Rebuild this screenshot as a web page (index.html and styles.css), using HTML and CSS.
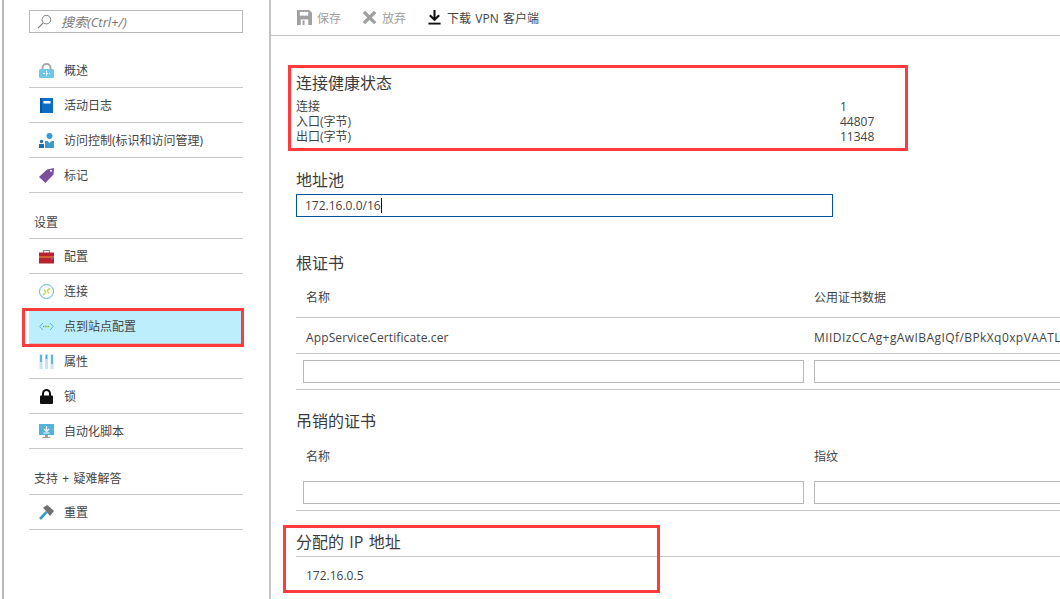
FILE: index.html
```html
<!DOCTYPE html>
<html lang="zh-CN">
<head>
<meta charset="utf-8">
<title>点到站点配置</title>
<link rel="stylesheet" href="styles.css">
</head>
<body>
<div class="app">
  <aside class="sidebar">
    <div class="search">
      <svg class="search-icon" viewBox="0 0 16 16"><circle cx="10" cy="6" r="4.6" fill="none" stroke="#777" stroke-width="1"/><path d="M6.6 9.4 1 15" stroke="#777" stroke-width="1.2" fill="none"/></svg>
      <span>搜索(Ctrl+/)</span>
    </div>
    <ul class="menu first">
      <li><svg class="ico" viewBox="0 0 15 15"><path d="M3.500 7V5a4 4 0 0 1 8 0V7" fill="none" stroke="#a8a8a8" stroke-width="2"/><rect y="6" width="15" height="9" rx="1.500" fill="#6ec6e8"/><path d="M7.500 7.500v6M4 10.500h7" stroke="#fff" stroke-width="1.200" stroke-dasharray="2 1"/></svg>概述</li>
      <li><svg class="ico" viewBox="0 0 15 15"><rect x="1" width="13" height="15" fill="#0a6fc4"/><rect x="1" width="2" height="15" fill="#0559a0"/><rect x="4.500" y="3" width="7" height="2.500" fill="#fff"/></svg>活动日志</li>
      <li><svg class="ico" viewBox="0 0 15 15"><circle cx="10.500" cy="3" r="3" fill="#3a9bd1"/><path d="M6 15V8h2.500l2 2 2-2H15v7z" fill="#3a9bd1"/><circle cx="2.500" cy="8.500" r="1.700" fill="#1f6fa8"/><rect y="11" width="5" height="4" fill="#1f6fa8"/></svg>访问控制(标识和访问管理)</li>
      <li><svg class="ico" viewBox="0 0 15 15"><path d="M0 9 8 1.500 15 0l-.5 6.500L6.500 15z" fill="#7b4f9e"/><circle cx="12" cy="2.800" r="1" fill="#fff"/></svg>标记</li>
    </ul>
    <h3 class="group">设置</h3>
    <ul class="menu">
      <li><svg class="ico" viewBox="0 0 15 15"><path d="M4.500 4V1.500h6V4" fill="none" stroke="#8a8a8a" stroke-width="1.200"/><rect y="3.500" width="15" height="11" fill="#b92231"/><rect y="7.500" width="15" height="1" fill="#e8a33c"/><rect x="12" y="8.500" width="2" height="2" fill="#8a5fb0"/></svg>配置</li>
      <li><svg class="ico" viewBox="0 0 15 15"><circle cx="7.500" cy="7.500" r="7" fill="#fff" stroke="#59b4d9" stroke-width="1"/><path d="M4 11 7 8M5 6l2 2M11 4 8 7M8 7l2 2" stroke="#b8d432" stroke-width="1.300" fill="none"/></svg>连接</li>
      <li class="active"><svg class="ico" viewBox="0 0 15 15"><path d="M4 4 .7 7.500 4 11M11 4l3.300 3.500L11 11" fill="none" stroke="#59b4d9" stroke-width="1"/><path d="M4 7.500h7" stroke="#7fba00" stroke-width="1.300" stroke-dasharray="1.300 1"/></svg>点到站点配置</li>
      <li><svg class="ico" viewBox="0 0 15 15"><path d="M2 0v15M7.500 0v15M13 0v15" stroke="#c6e3f0" stroke-width="3"/><path d="M2 1v7M7.500 1v4M13 1v9" stroke="#3fa9d6" stroke-width="1.500"/></svg>属性</li>
      <li><svg class="ico" viewBox="0 0 15 15"><path d="M4 7V4.500a3.500 3.500 0 0 1 7 0V7" fill="none" stroke="#111" stroke-width="2"/><rect x="1" y="6.500" width="13" height="8.500" rx="1" fill="#111"/></svg>锁</li>
      <li><svg class="ico" viewBox="0 0 15 15"><rect width="15" height="11" fill="#54b3dc"/><path d="M7.500 2v5M5 5l2.500 2.500L10 5M4.500 9h6" stroke="#fff" stroke-width="1.200" fill="none"/><path d="M6 11h3v2h2.500v1h-8v-1H6z" fill="#a0a0a0"/></svg>自动化脚本</li>
    </ul>
    <h3 class="group spaced">支持 + 疑难解答</h3>
    <ul class="menu">
      <li><svg class="ico" viewBox="0 0 15 15"><path d="M1 14 7.500 7" stroke="#3a9bd1" stroke-width="2.600" fill="none"/><path d="M4 2.500 8.500 0 15 6l-4 5z" fill="#707070"/></svg>重置</li>
    </ul>
  </aside>

  <main class="main">
    <div class="toolbar">
      <span class="tool off"><svg class="tool-ico" viewBox="0 0 16 16"><path d="M0 0h13l3 3v13H0z" fill="#a0a0a0"/><rect x="3" y="2" width="9" height="4" fill="#fff"/><rect x="4" y="10" width="8" height="6" fill="#fff"/><rect x="6" y="11" width="2" height="5" fill="#a0a0a0"/></svg>保存</span>
      <span class="tool off"><svg class="tool-ico" viewBox="0 0 16 16"><path d="M2 2l12 12M14 2 2 14" stroke="#a0a0a0" stroke-width="3.600"/></svg>放弃</span>
      <span class="tool spaced"><svg class="tool-ico" viewBox="0 0 16 16"><path d="M8 0v10M3 5.500l5 5 5-5" fill="none" stroke="#111" stroke-width="2.200"/><rect x="1.500" y="13.500" width="13" height="2" fill="#111"/></svg>下载 VPN 客户端</span>
    </div>
    <div class="content">
      <section class="health">
        <h2>连接健康状态</h2>
        <dl class="stats">
          <dt>连接</dt><dd>1</dd>
          <dt>入口(字节)</dt><dd>44807</dd>
          <dt>出口(字节)</dt><dd>11348</dd>
        </dl>
      </section>
      <section class="pool">
        <h2>地址池</h2>
        <div class="input focus">172.16.0.0/16<i class="caret"></i></div>
      </section>
      <section class="root">
        <h2>根证书</h2>
        <div class="grid head"><span>名称</span><span>公用证书数据</span></div>
        <div class="grid data"><span class="file">AppServiceCertificate.cer</span><span class="cert">MIIDIzCCAg+gAwIBAgIQf/BPkXq0xpVAATL</span></div>
        <div class="grid inputs"><div class="input"></div><div class="input"></div></div>
      </section>
      <section class="revoked">
        <h2>吊销的证书</h2>
        <div class="grid head"><span>名称</span><span>指纹</span></div>
        <div class="grid inputs"><div class="input"></div><div class="input"></div></div>
      </section>
      <section class="assigned">
        <h2 class="spaced">分配的 IP 地址</h2>
        <p>172.16.0.5</p>
      </section>
    </div>
  </main>
</div>
<div class="mark mark-nav"></div>
<div class="mark mark-health"></div>
<div class="mark mark-ip"></div>
</body>
</html>
```

FILE: styles.css
```css
* { box-sizing: border-box; }
html, body { margin: 0; height: 100%; overflow: hidden; background: #fff; }
body {
  font-family: "Open Sans", "Noto Sans CJK SC", sans-serif;
  font-size: 12px;
  color: #444;
}
.app { display: flex; height: 599px; width: 1060px; overflow: hidden; padding-left: 2px; }
.sidebar {
  flex: none;
  width: 269px;
  border-left: 2px solid #b8b8b8;
  border-right: 2px solid #c4c4c4;
  padding: 10px 26px 0 25px;
}
.search {
  height: 23px;
  border: 1px solid #b8b8b8;
  display: flex;
  align-items: center;
  padding-left: 7px;
  gap: 9px;
  font-size: 13px;
  font-style: italic;
  color: #777;
}
.search-icon { width: 15px; height: 15px; }
.menu { list-style: none; margin: 0; padding: 0; border-top: 1px solid #c8c8c8; }
.menu.first { border-top: 0; margin-top: 20px; }
.menu li {
  height: 35px;
  border-bottom: 1px solid #c8c8c8;
  display: flex;
  align-items: center;
  padding-left: 10px;
  gap: 10px;
  white-space: nowrap;
}
.menu li.active { background: #bdeefb; }
.ico { width: 15px; height: 15px; flex: none; }
.group {
  margin: 0;
  height: 45px;
  padding: 21px 0 0 5px;
  line-height: 17px;
  font-size: 12px;
  font-weight: 400;
}
.spaced { word-spacing: 1.2px; }
.main { flex: 1; min-width: 0; overflow: hidden; }
.toolbar {
  height: 36px;
  border-bottom: 1px solid #c4c4c4;
  display: flex;
  align-items: center;
  padding-left: 26px;
  gap: 21px;
}
.tool { display: flex; align-items: center; gap: 5px; white-space: nowrap; }
.tool.off { color: #a0a0a0; }
.tool-ico { width: 15px; height: 15px; flex: none; }
.content { padding-left: 25px; width: 789px; }
h2 { margin: 0; height: 20px; font-size: 16px; font-weight: 400; line-height: 22px; color: #3c3c3c; }
.health { padding-top: 37px; }
.health h2 { line-height: 20px; }
.stats {
  margin: 6px 0 0;
  display: grid;
  grid-template-columns: 544px auto;
  line-height: 15px;
  justify-content: start;
}
.stats dt, .stats dd { margin: 0; }
.pool { margin-top: 24px; }
.pool h2 { height: 26px; line-height: 24px; }
.input { height: 23px; border: 1px solid #b8b8b8; background: #fff; }
.input.focus {
  width: 537px;
  border-color: #00579e;
  padding-left: 8px;
  line-height: 21px;
  display: flex;
  align-items: center;
}
.caret { width: 1px; height: 15px; background: #111; }
.root { margin-top: 35px; }
.root h2 { line-height: 23px; }
.grid { display: grid; white-space: nowrap; border-bottom: 1px solid #c8c8c8; width: 764px; overflow: hidden; }
.grid.head, .grid.data { grid-template-columns: 508px 256px; padding-left: 10px; }
.grid span { display: block; }
.grid.head { height: 46px; padding-top: 17px; line-height: 18px; }
.grid.data { height: 36px; padding-top: 3px; align-items: center; }
.file { letter-spacing: .12px; }
.cert { letter-spacing: .42px; }
.grid.inputs { height: 36px; padding: 6px 0 0 7px; grid-template-columns: 501px 500px; column-gap: 10px; }
.revoked { margin-top: 20px; }
.revoked .grid.head { border-bottom: 0; height: 40px; padding-top: 18px; }
.revoked .grid.inputs { height: 41px; padding-top: 11px; }
.assigned { margin-top: 20px; width: 764px; }
.assigned h2 { height: 26px; border-bottom: 1px solid #c8c8c8; }
.assigned p { margin: 10px 0 0 10px; line-height: 18px; }
.mark { position: absolute; border: 3px solid #ff3b3b; pointer-events: none; }
.mark-nav { left: 22px; top: 308px; width: 222px; height: 39px; }
.mark-health { left: 288px; top: 65px; width: 620px; height: 86px; }
.mark-ip { left: 283px; top: 525px; width: 377px; height: 68px; }
```
